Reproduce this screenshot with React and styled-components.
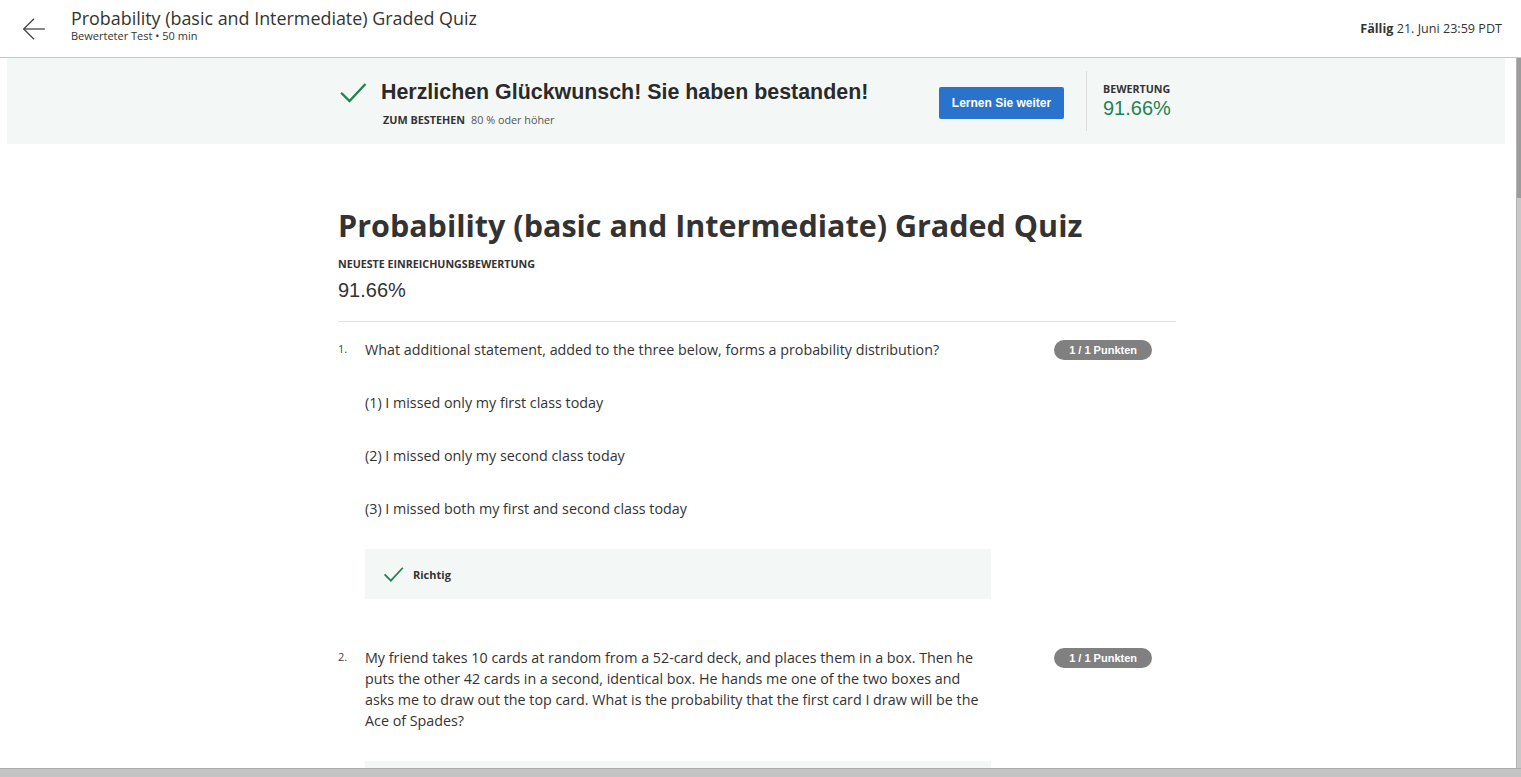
import React from 'react'
import styled, { createGlobalStyle } from 'styled-components'

const GlobalStyle = createGlobalStyle`
  html, body {
    margin: 0;
    padding: 0;
    height: 100%;
    overflow: hidden;
    background: #fff;
    font-family: 'Open Sans', sans-serif;
    color: #333;
  }
  #root {
    height: 100%;
  }
`

const Page = styled.div`
  display: flex;
  flex-direction: column;
  height: 777px;
`

const Header = styled.header`
  flex: 0 0 58px;
  display: flex;
  align-items: center;
  border-bottom: 1px solid #c8c8c8;
  box-sizing: border-box;
  padding: 0 19px 0 20px;
`

const BackButton = styled.button`
  border: 0;
  background: none;
  padding: 0;
  width: 28px;
  height: 28px;
  display: flex;
  align-items: center;
  justify-content: center;
  color: #444;
  cursor: pointer;
`

const HeaderTitles = styled.div`
  margin-left: 23px;
  flex: 1;
  display: flex;
  flex-direction: column;
  margin-top: -8px;
`

const HeaderTitle = styled.h1`
  margin: 0;
  font-size: 17.9px;
  font-weight: 400;
  line-height: 22px;
  color: #333;
`

const HeaderSub = styled.div`
  font-size: 11px;
  line-height: 14px;
  color: #333;
`

const Due = styled.div`
  font-size: 12.6px;
  color: #333;
  b {
    font-weight: 700;
  }
`

const Body = styled.div`
  flex: 1;
  min-height: 0;
  display: flex;
`

const Scroller = styled.main`
  flex: 1;
  min-width: 0;
  overflow: hidden;
`

const ScrollTrack = styled.div`
  flex: 0 0 5px;
  background: #c8c8c8;
  border-left: 1px solid #b4b4b4;
  box-sizing: border-box;
`

const ScrollThumb = styled.div`
  height: 140px;
  background: #9c9c9c;
`

const BottomBar = styled.div`
  flex: 0 0 8px;
  background: #c4c4c4;
  border-top: 1px solid #adadad;
`

const Banner = styled.section`
  margin: 0 11px 0 7px;
  height: 86px;
  background: #f3f8f6;
  display: flex;
  justify-content: center;
  padding-left: 2px;
`

const BannerInner = styled.div`
  width: 838px;
  display: flex;
  align-items: center;
`

const Congrats = styled.div`
  display: flex;
  align-items: flex-start;
  flex: 0 0 auto;
  margin-top: 4px;
  margin-left: 1px;
`

const CongratsText = styled.div`
  margin-left: 14px;
`

const CongratsTitle = styled.div`
  font-family: 'Liberation Sans', Arial, sans-serif;
  font-weight: 700;
  font-size: 21.4px;
  line-height: 26px;
  color: #2a2a2a;
`

const PassRule = styled.div`
  margin-top: 7px;
  margin-left: 2px;
  font-size: 10.8px;
  color: #555;
  b {
    color: #333;
    font-weight: 700;
    margin-right: 6px;
  }
`

const PrimaryButton = styled.button`
  margin-left: auto;
  margin-right: 22px;
  margin-top: 4px;
  height: 32px;
  width: 125px;
  padding: 0;
  border: 0;
  border-radius: 2px;
  background: #2a73cc;
  color: #fff;
  font-family: 'Liberation Sans', Arial, sans-serif;
  font-weight: 700;
  font-size: 12px;
  white-space: nowrap;
  cursor: pointer;
`

const GradeBox = styled.div`
  flex: 0 0 90px;
  box-sizing: border-box;
  height: 60px;
  border-left: 1px solid #dcdcdc;
  padding-left: 16px;
  display: flex;
  flex-direction: column;
  justify-content: center;
`

const SmallCaps = styled.div`
  font-size: 10.7px;
  font-weight: 700;
  color: #333;
  line-height: 14px;
`

const GradeValue = styled.div`
  font-family: 'Liberation Sans', Arial, sans-serif;
  font-size: 20px;
  line-height: 24px;
  color: ${props => props.color || '#333'};
`

const Content = styled.div`
  width: 838px;
  margin: 0 auto;
  padding: 59px 2px 0 0;
`

const QuizTitle = styled.h2`
  margin: 0;
  font-size: 30.5px;
  font-weight: 700;
  line-height: 44px;
  color: #333;
`

const LatestScore = styled.div`
  margin-top: 10px;
  padding-bottom: 19px;
  border-bottom: 1px solid #e2e2e2;
  ${GradeValue} {
    margin-top: 7px;
  }
`

const Question = styled.div`
  display: grid;
  grid-template-columns: 27px 626px 1fr;
  padding-top: 17px;
  padding-bottom: 31px;
`

const QNumber = styled.div`
  font-size: 11px;
  line-height: 20px;
  color: #444;
`

const QBody = styled.div`
  font-size: 14.3px;
  line-height: 21px;
  color: #333;
`

const QPara = styled.p`
  margin: 0 0 32px;
  &:last-of-type {
    margin-bottom: 30px;
  }
`

const PointsCol = styled.div`
  display: flex;
  justify-content: flex-end;
  padding-right: 24px;
`

const Points = styled.span`
  height: 20px;
  padding: 0 15px;
  margin-top: 1px;
  border-radius: 10px;
  background: #808080;
  color: #fff;
  font-family: 'Liberation Sans', Arial, sans-serif;
  font-weight: 700;
  font-size: 11px;
  line-height: 20px;
  white-space: nowrap;
`

const Feedback = styled.div`
  height: 50px;
  background: #f3f8f6;
  display: flex;
  align-items: center;
  padding-left: 18px;
  gap: 9px;
  font-size: 11px;
  font-weight: 700;
  color: #333;
`

const Check = ({ size = 26 }) => (
  <svg width={size} height={size} viewBox="0 0 24 24" fill="none">
    <path d="M2.5 12.5 L9 19 L22 5" stroke="#1f8354" strokeWidth="2" strokeLinecap="square" />
  </svg>
)

const BackArrow = () => (
  <svg width="26" height="26" viewBox="0 0 24 24" fill="none" stroke="#444" strokeWidth="1.2">
    <path d="M22 12 H2.5" />
    <path d="M12 2.5 L2.5 12 L12 21.5" />
  </svg>
)

const questions = [
  {
    n: 1,
    paras: [
      'What additional statement, added to the three below, forms a probability distribution?',
      '(1) I missed only my first class today',
      '(2) I missed only my second class today',
      '(3) I missed both my first and second class today'
    ]
  },
  {
    n: 2,
    paras: [
      'My friend takes 10 cards at random from a 52-card deck, and places them in a box. Then he puts the other 42 cards in a second, identical box. He hands me one of the two boxes and asks me to draw out the top card. What is the probability that the first card I draw will be the Ace of Spades?'
    ]
  }
]

const App = () => (
  <Page>
    <GlobalStyle />
    <Header>
      <BackButton aria-label="Zurück">
        <BackArrow />
      </BackButton>
      <HeaderTitles>
        <HeaderTitle>Probability (basic and Intermediate) Graded Quiz</HeaderTitle>
        <HeaderSub>Bewerteter Test • 50 min</HeaderSub>
      </HeaderTitles>
      <Due>
        <b>Fällig</b> 21. Juni 23:59 PDT
      </Due>
    </Header>
    <Body>
      <Scroller>
        <Banner>
          <BannerInner>
            <Congrats>
              <Check size={28} />
              <CongratsText>
                <CongratsTitle>Herzlichen Glückwunsch! Sie haben bestanden!</CongratsTitle>
                <PassRule>
                  <b>ZUM BESTEHEN</b>80 % oder höher
                </PassRule>
              </CongratsText>
            </Congrats>
            <PrimaryButton>Lernen Sie weiter</PrimaryButton>
            <GradeBox>
              <SmallCaps>BEWERTUNG</SmallCaps>
              <GradeValue color="#1f8354">91.66%</GradeValue>
            </GradeBox>
          </BannerInner>
        </Banner>
        <Content>
          <QuizTitle>Probability (basic and Intermediate) Graded Quiz</QuizTitle>
          <LatestScore>
            <SmallCaps>NEUESTE EINREICHUNGSBEWERTUNG</SmallCaps>
            <GradeValue>91.66%</GradeValue>
          </LatestScore>
          {questions.map(q => (
            <Question key={q.n}>
              <QNumber>{q.n}.</QNumber>
              <QBody>
                {q.paras.map((p, i) => (
                  <QPara key={i}>{p}</QPara>
                ))}
                <Feedback>
                  <Check size={21} />
                  Richtig
                </Feedback>
              </QBody>
              <PointsCol>
                <Points>1 / 1 Punkten</Points>
              </PointsCol>
            </Question>
          ))}
        </Content>
      </Scroller>
      <ScrollTrack>
        <ScrollThumb />
      </ScrollTrack>
    </Body>
    <BottomBar />
  </Page>
)

export default App
